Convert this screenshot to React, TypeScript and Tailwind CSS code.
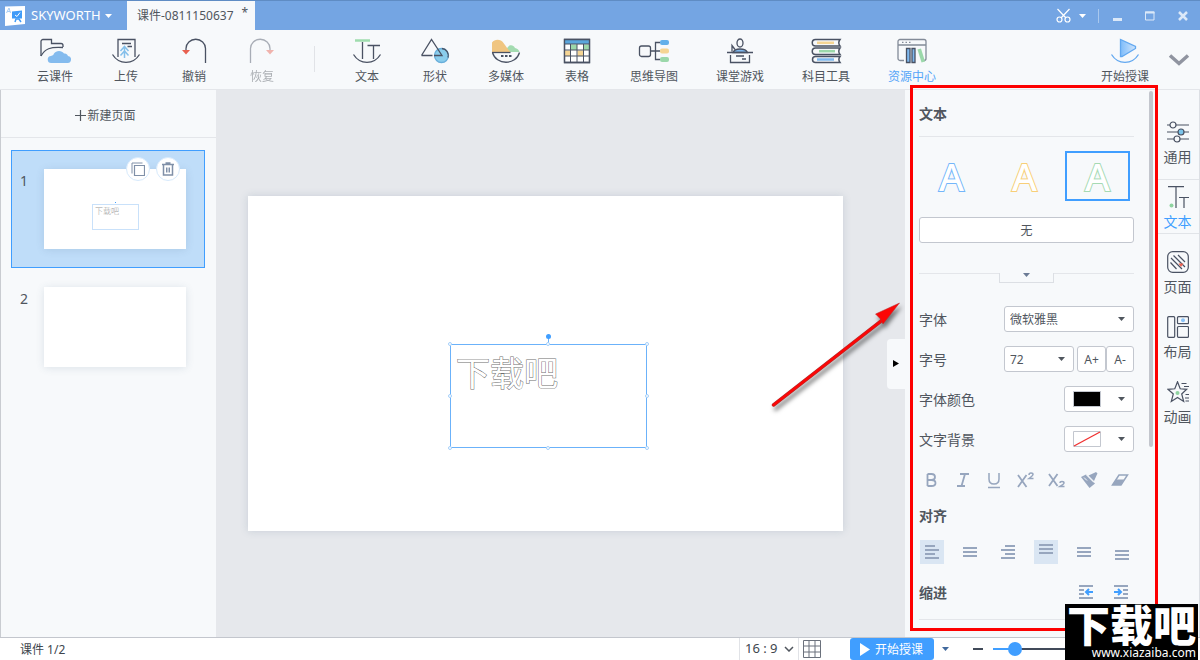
import { useState, type ReactNode } from 'react';
import clsx from 'clsx';

const INK = '#4a5263';

const Arc = ({ color = INK }: { color?: string }) => (
  <path d="M2.5 16.5C9 27 23 27 29.5 16.5" fill="none" stroke={color} strokeWidth="1.3" />
);

const icons: Record<string, ReactNode> = {
  cloud: (
    <>
      <path d="M2 18V3.5a2 2 0 0 1 2-2h8.5v4h9.500a2 2 0 0 1 2 2V9" />
      <path d="M2 18C6 11 11 8.500 24 9.500" />
      <path d="M12.500 25a3.500 3.500 0 0 1-.5-7c1.500-.5 2.500-1 3-2.500 2-3.500 8-3.500 10 0 3 0 3.500 1.500 4 2.500a3.500 3.500 0 0 1-1 7z" fill="#84bbee" stroke="none" />
    </>
  ),
  upload: (
    <>
      <path d="M8 19V1.500h17V19" />
      <path d="M12 5.500h9M17.500 8.500H22" />
      <path d="M14.500 20V9.500M10.500 13l4-4.500 4 4.500M10.500 17.500l4-4.500 4 4.500" stroke="#84bfea" strokeWidth="1.500" />
      <Arc />
    </>
  ),
  undo: (
    <>
      <path d="M8 13v-2.500a9.500 9 0 0 1 19.500 0V25" />
      <path d="M4 12h8l-4 4.500z" fill="#e8604f" stroke="none" />
    </>
  ),
  redo: (
    <>
      <path d="M24 13v-2.500a9.500 9 0 0 0-19.500 0V25" />
      <path d="M20 12h8l-4 4.500z" fill="#e8604f" stroke="none" />
    </>
  ),
  text: (
    <>
      <path d="M4 2.500h15" stroke="#9fdcae" strokeWidth="2.500" />
      <path d="M11.500 4v17M16.500 7.500H29M22.500 7.500V21" />
      <Arc />
    </>
  ),
  shape: (
    <>
      <circle cx="22.500" cy="17.500" r="7" fill="#8acdec" stroke="#68aeda" />
      <path d="M2.500 17.500L12.500 1.500l10.500 16h-8M2.500 17.500h11" />
      <path d="M23 10.500a7 7 0 0 1 6 9" />
    </>
  ),
  media: (
    <>
      <path d="M16 14c1-8 7-8 9-4 2 .5 4 1.500 4.500 4z" fill="#a3dbb0" stroke="none" />
      <path d="M2 14V4.500c3-4 9-3.500 11.500.5 2.500 3.500 4.500 6 7 9z" fill="#f0c580" stroke="none" />
      <path d="M2 14.500h18.500" />
      <path d="M2.500 14.500C6 27.500 26 27.500 29.500 14.500" />
      <path d="M11 18h2.500M15 18h2.500M19 18h2.500" strokeWidth="2" />
    </>
  ),
  table: (
    <>
      <path d="M3.500 1.500h25v23h-25z" fill="#fff" />
      <path d="M4 2h24v4H4z" fill="#5ba7dd" stroke="none" />
      <path d="M10 6.500h6V12h-6zM22.500 6.500h6V12h-6z" fill="#9bd8aa" stroke="none" />
      <path d="M4 12.500h6V18H4zM16.500 12.500h6V18h-6z" fill="#f5d594" stroke="none" />
      <path d="M3.500 6h25M3.500 12h25M3.500 18h25M9.500 6v18.500M16 6v18.500M22.500 6v18.500" strokeWidth="1" />
      <path d="M3.500 1.500h25v23h-25z" />
    </>
  ),
  mind: (
    <>
      <rect x="1.500" y="8" width="11" height="10.500" rx="2" />
      <path d="M12.500 13H22M22 4.500h-4.500v17H22" />
      <rect x="22" y="2" width="9" height="5" rx="2" fill="#63b0ea" stroke="none" />
      <rect x="22" y="10.500" width="9" height="5" rx="2" fill="#f5d594" stroke="none" />
      <rect x="22" y="19" width="9" height="5" rx="2" fill="#9bd8aa" stroke="none" />
    </>
  ),
  game: (
    <>
      <ellipse cx="16" cy="5" rx="3" ry="4" />
      <path d="M9 14.500c1-2.500 3-3.500 7-3.500s6.500 1 7.500 3.500z" fill="#7eb8ee" />
      <path d="M11 11.500L8 7.500v6M3 14.500h26M6.500 17v7.500h19V17M12 18h8M18 21h4" />
    </>
  ),
  books: (
    <>
      <path d="M30 1.500H5.500a3 3 0 0 0 0 6.500H30c-1.500-2-1.500-4.500 0-6.500zM30 10H5.500a3 3 0 0 0 0 6.500H30c-1.500-2-1.500-4.500 0-6.500zM30 18.500H5.500a3 3 0 0 0 0 6H30c-1.500-2-1.500-4 0-6z" strokeWidth="1.500" />
      <path d="M7 4.800h17" stroke="#f5d594" strokeWidth="2.500" />
      <path d="M9 13.200h16" stroke="#9bd8aa" strokeWidth="2.500" />
      <path d="M7 21.500h17" stroke="#7eb8ee" strokeWidth="2.500" />
    </>
  ),
  resource: (
    <>
      <path d="M8 22.500H4a2 2 0 0 1-2-2V3.500a2 2 0 0 1 2-2h24a2 2 0 0 1 2 2v17a2 2 0 0 1-2 2M2 7h28" stroke="#838b98" />
      <path d="M6 4.300h1.500M9.500 4.300H11M13 4.300h1.500" stroke="#838b98" />
      <path d="M10.500 10.500H14v14h-3.500zM16 10.500h3v14h-3z" fill="#7eb8ee" />
      <path d="M21.500 11.500l3.500-1 4 13-3.500 1z" fill="#9bd8aa" stroke="none" />
    </>
  ),
  play: (
    <>
      <defs>
        <linearGradient id="playFill">
          <stop offset="0" stopColor="#7ebcfa" />
          <stop offset="1" stopColor="#cfe5fc" />
        </linearGradient>
      </defs>
      <path d="M11.500 1.500v17h1.500l13.500-8v-2z" fill="url(#playFill)" stroke="#62a8f0" />
      <Arc color="#62a8f0" />
    </>
  ),
};

const historyTools = [
  { label: '云课件', icon: 'cloud', width: 'w-[74px]' },
  { label: '上传', icon: 'upload', width: 'w-[68px]' },
  { label: '撤销', icon: 'undo', width: 'w-[68px]' },
  { label: '恢复', icon: 'redo', width: 'w-[68px]', tone: 'opacity-45' },
];

const insertTools = [
  { label: '文本', icon: 'text', width: 'w-[68px]' },
  { label: '形状', icon: 'shape', width: 'w-[68px]' },
  { label: '多媒体', icon: 'media', width: 'w-[74px]' },
  { label: '表格', icon: 'table', width: 'w-[68px]' },
  { label: '思维导图', icon: 'mind', width: 'w-[86px]' },
  { label: '课堂游戏', icon: 'game', width: 'w-[86px]' },
  { label: '科目工具', icon: 'books', width: 'w-[86px]' },
  { label: '资源中心', icon: 'resource', width: 'w-[86px]', tone: 'text-[#55a5f8]' },
];

type Tool = { label: string; icon: string; width: string; tone?: string };

function ToolButton({ label, icon, width, tone }: Tool) {
  return (
    <button className={clsx('flex flex-col items-center shrink-0 pt-2 gap-[5px]', width, tone)}>
      <svg width="32" height="26" viewBox="0 0 32 26" fill="none" stroke={INK} strokeWidth="1.3">
        {icons[icon]}
      </svg>
      <span className="text-xs leading-4">{label}</span>
    </button>
  );
}

function Caret({ className }: { className?: string }) {
  return (
    <svg width="7" height="4" viewBox="0 0 7 4" className={className} fill="currentColor">
      <path d="M0 0h7L3.500 4z" />
    </svg>
  );
}

function TitleBar() {
  return (
    <header className="flex items-stretch h-[30px] shrink-0 bg-[#74a5e3] border-t border-[#5f8cc4] text-white">
      <button className="flex items-center w-[127px] pl-[5px]">
        <svg width="20" height="20" viewBox="0 0 20 20">
          <path d="M0 .5L20 0v18L0 20z" fill="#fff" />
          <path d="M1.500 7L4 2l1.500 5M2.200 5.500h3" fill="none" stroke="#a8cdf5" />
          <path d="M7 5.500l10-1v8H7z" fill="#3f9bf8" />
          <path d="M10 16l1-3h3l2 3" fill="none" stroke="#3f9bf8" strokeWidth="1.500" />
          <path d="M10 9l2 1.500 3-4" fill="none" stroke="#fff" />
        </svg>
        <span className="ml-1.5 text-[13px]">SKYWORTH</span>
        <Caret className="ml-1" />
      </button>
      <div className="flex items-center w-[128px] pl-2.5 bg-[#f7f9fb] text-[#50565e] text-xs whitespace-nowrap">
        <span>课件-0811150637</span>
        <span className="ml-2 self-start pt-1">*</span>
      </div>
      <div className="flex items-center ml-auto pr-[11px]">
        <button className="flex items-center gap-2" aria-label="截图">
          <svg width="15" height="15" viewBox="0 0 15 15" fill="none" stroke="#fff" strokeWidth="1.2">
            <path d="M1.500 1l8.500 9M13.500 1L5 10" />
            <circle cx="3.500" cy="11.500" r="2.500" />
            <circle cx="11.500" cy="11.500" r="2.500" />
          </svg>
          <Caret />
        </button>
        <span className="w-px h-3.5 mx-3 bg-[#a9c8ee]" />
        <button aria-label="最小化">
          <svg width="12" height="12"><path d="M2 9.500h9" stroke="#dbe8f8" strokeWidth="3" /></svg>
        </button>
        <button aria-label="最大化" className="ml-[21px]">
          <svg width="12" height="12" fill="none" stroke="#dbe8f8"><path d="M1.500 2h8.500v8H1.500z" /><path d="M1 2.500h9.500" strokeWidth="2" /></svg>
        </button>
        <button aria-label="关闭" className="ml-[21px]">
          <svg width="12" height="12" fill="none" stroke="#dbe8f8" strokeWidth="2.500"><path d="M2 2l8 8M10 2l-8 8" /></svg>
        </button>
      </div>
    </header>
  );
}

function Toolbar() {
  return (
    <nav className="flex h-[60px] shrink-0 pl-[18px] bg-[#f7f9fb] border-b border-[#e4e6ea] text-[#50565e]">
      {historyTools.map((t) => <ToolButton key={t.label} {...t} />)}
      <span className="w-px h-[26px] mt-4 mx-[18px] bg-[#e1e3e7] shrink-0" />
      {insertTools.map((t) => <ToolButton key={t.label} {...t} />)}
      <div className="flex ml-auto pr-2.5">
        <ToolButton label="开始授课" icon="play" width="w-[86px]" />
        <button aria-label="收起工具栏">
          <svg width="22" height="14" viewBox="0 0 22 14" fill="none" stroke="#9094a0" strokeWidth="3.500">
            <path d="M2 2.500l9 8 9-8" />
          </svg>
        </button>
      </div>
    </nav>
  );
}

function PageList() {
  const [current, setCurrent] = useState(1);
  return (
    <aside className="w-[216px] shrink-0 border-l border-[#c9ccd1] bg-[#f7f9fb] text-[#50565e]">
      <button className="flex items-center justify-center gap-px w-full h-12 pt-1 pr-1.5 border-b border-[#e4e6ea] text-xs">
        <svg width="11" height="11" stroke="#50565e" strokeWidth="1.2"><path d="M0 5.500h11M5.500 0v11" /></svg>
        新建页面
      </button>
      <ol className="pl-2.5 pr-[11px] pt-3">
        {[1, 2].map((n) => (
          <li
            key={n}
            onClick={() => setCurrent(n)}
            className={clsx(
              'relative flex h-[118px] pt-[18px] pl-2 border',
              current === n ? 'bg-[#bfddf9] border-[#409eff]' : 'border-transparent',
            )}
          >
            <span className="w-6 pt-0.5 text-sm">{n}</span>
            <div className="w-[142px] h-20 pl-12 pt-[35px] bg-white shadow-[0_1px_8px_rgba(60,90,120,0.14)]">
              {n === 1 && (
                <div className="relative w-[47px] h-[26px] pl-0.5 border border-[#c9e1fa] text-[8px] leading-3 text-[#999999] font-light">
                  下载吧
                  <span className="absolute left-[22px] -top-[3px] w-px h-px bg-[#409eff]" />
                </div>
              )}
            </div>
            {current === n && (
              <div className="absolute right-6 top-1.5 flex gap-1.5">
                <button aria-label="复制页面" className="flex items-center justify-center w-6 h-6 rounded-full bg-white border border-[#d7eafc]">
                  <svg width="14" height="14" fill="none" stroke="#8090a8"><path d="M3.500 3.500h10v10h-10z" strokeWidth="1.2" /><path d="M1 11.500V1h10.500" /></svg>
                </button>
                <button aria-label="删除页面" className="flex items-center justify-center w-6 h-6 rounded-full bg-white border border-[#d7eafc]">
                  <svg width="14" height="14" fill="none" stroke="#8090a8"><path d="M1 2.500h12M4.500 1h5" strokeWidth="1.500" /><path d="M2.500 3v10h9V3" strokeWidth="1.500" /><path d="M5.500 5.500v5M7 5.500v5M8.500 5.500v5" /></svg>
                </button>
              </div>
            )}
          </li>
        ))}
      </ol>
    </aside>
  );
}

const handles = [
  '-left-[3px] -top-[3px]', 'left-[95px] -top-[3px]', '-right-[3px] -top-[3px]',
  '-left-[3px] top-[49px]', '-right-[3px] top-[49px]',
  '-left-[3px] -bottom-[3px]', 'left-[95px] -bottom-[3px]', '-right-[3px] -bottom-[3px]',
];

function Canvas() {
  return (
    <main className="relative flex items-center flex-1 min-w-0 bg-[#e6e8ec]">
      <div className="flex justify-center flex-1 pr-3">
        <div className="relative w-full max-w-[595px] aspect-video bg-white shadow-[0_0_8px_rgba(60,90,120,0.18)]">
          <div className="absolute left-[202px] top-[148px] w-[197px] h-[104px] pl-[5px] pt-1 border border-[#6bb2fa]">
            <p className="text-[34px] leading-[48px] font-normal text-white [-webkit-text-stroke:1px_#6e6e6e] [paint-order:stroke_fill]">下载吧</p>
            <span className="absolute left-[97px] -top-[7px] w-px h-1.5 bg-[#6bb2fa]" />
            <span className="absolute left-[95px] -top-[11px] w-[5px] h-[5px] rounded-full bg-[#409eff]" />
            {handles.map((pos) => (
              <span key={pos} className={clsx('absolute w-1 h-1 rounded-full bg-white border border-[#a5d0fb]', pos)} />
            ))}
          </div>
        </div>
      </div>
      <button aria-label="收起面板" className="flex items-center justify-center w-[18px] h-[50px] rounded-l bg-[#f7f9fb]">
        <svg width="6" height="7"><path d="M0 0l6 3.500L0 7z" /></svg>
      </button>
      <svg width="150" height="124" viewBox="0 0 150 124" className="absolute right-0 top-[204px] drop-shadow-[2px_4px_2px_rgba(0,0,0,0.5)] pointer-events-none">
        <path d="M18.500 111L130 24" stroke="#b03030" strokeWidth="3.500" strokeLinecap="round" />
        <path d="M18.500 111L130 24" stroke="#fc0606" strokeWidth="2.500" strokeLinecap="round" />
        <path d="M144.500 9l-24 11 4.500 4.500 3 5.500z" fill="#fc0606" stroke="#b03030" strokeWidth=".5" />
      </svg>
    </main>
  );
}

const letterStyles = [
  { name: '蓝色描边', stroke: '[-webkit-text-stroke:2px_#74b6fa]' },
  { name: '黄色描边', stroke: '[-webkit-text-stroke:2px_#f8cf78]' },
  { name: '绿色描边', stroke: '[-webkit-text-stroke:2px_#a6dab3]' },
];

const box = 'h-[26px] bg-white border border-[#c3c7cf] rounded-[3px] text-xs';
const line = 'fill-none stroke-current stroke-2';

const formats = [
  { name: '加粗', icon: <path d="M5.500 3v12M5.500 3h4q3.500 0 3.500 3t-3.500 3h-4M9.500 9q4 0 4 3t-4 3h-4" /> },
  { name: '斜体', icon: <path d="M6 3h9M3 15h8M11 3L7.500 15" /> },
  { name: '下划线', icon: <path d="M4 2v6q0 5 5 5t5-5V2M3 16.500h12" strokeWidth="1.500" /> },
  { name: '上标', icon: <><path d="M1 4l8.500 12M9.500 4L1 16" /><path d="M12 4q0-2 2-2t2 1.500q0 1-4 4h4.500" strokeWidth="1.500" /></> },
  { name: '下标', icon: <><path d="M1 3l8.500 12M9.500 3L1 15" /><path d="M12 12q0-1.500 2-1.500t2 1.500q0 1-4 3.500h4.500" strokeWidth="1.500" /></> },
  { name: '格式刷', icon: <><path d="M1 6l5-2.500 9 9L9.500 17z" fill="currentColor" stroke="none" /><path d="M8.500 4.500L14 2l2-1 1.500 1.500-1 2L14 10z" fill="currentColor" stroke="none" /><path d="M6.500 4L14 11.500M4 6.500l3 3" stroke="#f7f9fb" strokeWidth="1" /></> },
  { name: '清除格式', icon: <><path d="M1.500 14L8 4h8.500L10 14z" strokeWidth="1.500" /><path d="M1.500 14l3.500-5.500h8L10 14z" fill="currentColor" stroke="none" /></> },
];

const aligns = [
  { name: '左对齐', d: 'M5 6h10M5 10h14M5 14h10M5 18h14', on: true },
  { name: '居中', d: 'M5 8h14M5 12h14M5 16h14' },
  { name: '右对齐', d: 'M9 6h10M5 10h14M9 14h10M5 18h14' },
  { name: '顶端对齐', d: 'M5 5h14M5 9h14M5 13h14', on: true },
  { name: '垂直居中', d: 'M5 8h14M5 12h14M5 16h14' },
  { name: '底端对齐', d: 'M5 11h14M5 15h14M5 19h14' },
];

function TextPanel() {
  const [style, setStyle] = useState(2);
  return (
    <section className="relative flex w-[250px] shrink-0 pl-3.5 bg-[#f7f9fb] text-[#50565e]">
      <div className="w-[215px]">
        <h2 className="h-[47px] pt-3.5 text-sm font-semibold border-b border-[#e4e6ea]">文本</h2>
        <div className="flex gap-2 mt-3.5">
          {letterStyles.map((s, i) => (
            <button
              key={s.name}
              aria-label={s.name}
              onClick={() => setStyle(i)}
              className={clsx(
                'flex items-center justify-center w-[65px] h-[50px] border-2',
                style === i ? 'border-[#409eff]' : 'border-transparent',
              )}
            >
              <span className={clsx("font-['Noto_Sans'] font-medium text-[38px] leading-none text-white [paint-order:stroke_fill]", s.stroke)}>A</span>
            </button>
          ))}
        </div>
        <button className={clsx(box, 'w-full mt-4 pt-px')}>无</button>
        <div className="flex mt-[30px]">
          <span className="flex-1 border-t border-[#e4e6ea]" />
          <button aria-label="展开" className="flex items-start justify-center w-[55px] h-2.5 border border-t-0 border-[#dcdfe4] text-[#6b7b95]">
            <Caret />
          </button>
          <span className="flex-1 border-t border-[#e4e6ea]" />
        </div>

        <div className="grid gap-3.5 mt-[23px] text-sm">
          <div className="flex items-center justify-between">
            <label htmlFor="family" className="pt-0.5">字体</label>
            <div className="relative w-[130px]">
              <select id="family" className={clsx(box, 'w-full pl-[5px] pt-px appearance-none')}>
                <option>微软雅黑</option>
              </select>
              <Caret className="absolute right-[9px] top-[11px] pointer-events-none" />
            </div>
          </div>
          <div className="flex items-center">
            <label htmlFor="size" className="flex-1 pt-0.5">字号</label>
            <div className="relative w-[70px] mr-[3px]">
              <select id="size" className={clsx(box, 'w-full pl-[5px] pt-px appearance-none')}>
                <option>72</option>
              </select>
              <Caret className="absolute right-[9px] top-[11px] pointer-events-none" />
            </div>
            <button className={clsx(box, 'w-[29px] pt-px')}>A+</button>
            <button className={clsx(box, 'w-7 pt-px')}>A-</button>
          </div>
          <div className="flex items-center justify-between">
            <span id="color" className="pt-0.5">字体颜色</span>
            <button aria-labelledby="color" className={clsx(box, 'flex items-center justify-between w-[70px] px-2')}>
              <span className="w-7 h-4 bg-black border border-[#c3c7cf]" />
              <Caret />
            </button>
          </div>
          <div className="flex items-center justify-between">
            <span id="background" className="pt-0.5">文字背景</span>
            <button aria-labelledby="background" className={clsx(box, 'flex items-center justify-between w-[70px] px-2')}>
              <svg width="28" height="16" fill="none"><path d="M.5.5h27v15H.5z" stroke="#c3c7cf" /><path d="M1 15L27 1" stroke="#f03030" strokeWidth="1.3" /></svg>
              <Caret />
            </button>
          </div>
        </div>

        <div className="flex justify-between mt-[19px] pl-[3px] pr-[5px] text-[#97a6be]">
          {formats.map((f) => (
            <button key={f.name} aria-label={f.name}>
              <svg width="18" height="18" viewBox="0 0 18 18" className="fill-none stroke-current" strokeWidth="1.8">{f.icon}</svg>
            </button>
          ))}
        </div>
        <h3 className="mt-[17px] text-sm font-semibold">对齐</h3>
        <div className="flex gap-3.5 mt-3.5 pl-px text-[#97a6be]">
          {aligns.map((a) => (
            <button key={a.name} aria-label={a.name} className={clsx(a.on && 'bg-[#dae6f3]')}>
              <svg width="24" height="24" className={line}><path d={a.d} /></svg>
            </button>
          ))}
        </div>
        <div className="flex items-center gap-[21px] h-14 pr-1.5 text-[#97a6be] border-b border-[#e4e6ea]">
          <h3 className="flex-1 pt-0.5 text-sm font-semibold text-[#50565e]">缩进</h3>
          <button aria-label="减少缩进">
            <svg width="14" height="14" className={line}><path d="M0 1h14M0 5h5M0 9h5M0 13h14" /><path d="M7 7h7M10 4L7 7l3 3" stroke="#409eff" /></svg>
          </button>
          <button aria-label="增加缩进">
            <svg width="14" height="14" className={line}><path d="M0 1h14M9 5h5M9 9h5M0 13h14" /><path d="M0 7h7M4 4l3 3-3 3" stroke="#409eff" /></svg>
          </button>
        </div>
      </div>
      <div className="w-1 h-[356px] mt-px ml-[15px] rounded-full bg-[#c3c6cd]" />
      <div className="absolute left-[5px] -right-[3px] -top-[5px] bottom-1.5 border-3 border-[#fd0000] z-10 pointer-events-none" />
    </section>
  );
}

const tabs = [
  {
    label: '通用',
    icon: <><path d="M0 4h22M0 11h22M0 18h22" /><circle cx="6" cy="4" r="3" fill="#f7f9fb" /><circle cx="14" cy="11" r="3" fill="#7cc4ea" /><circle cx="10" cy="18" r="3" fill="#f7f9fb" /></>,
  },
  {
    label: '文本',
    icon: <><path d="M1 .7h16M9 1v21M12 11.500h10M17 12v10" /><circle cx="4.500" cy="19.500" r="2" fill="#8fd3a0" stroke="none" /></>,
  },
  {
    label: '页面',
    icon: <><rect x=".7" y=".7" width="20.600" height="20.600" rx="5" /><path d="M4 7l11 11M3.500 11.500l6 6.500M6.500 4.500L18 16M11 4l7 7" /><path d="M11.500 12.500h5L14 16z" fill="#ee6050" stroke="none" /></>,
  },
  {
    label: '布局',
    icon: <><rect x=".7" y=".7" width="7" height="20.600" rx="1" /><rect x="10.500" y=".7" width="11" height="7" rx="1" /><rect x="10.500" y="10.500" width="11" height="10.800" rx="1" /><circle cx="16" cy="4.200" r="2" fill="#8cc3f8" stroke="none" /></>,
  },
  {
    label: '动画',
    icon: <><path d="M10.500.8l2.700 7 6.500.5-5 4.700 2 7.500-6.200-4-6.200 4 2-7.500-5.300-4.700 6.800-.5z" /><path d="M14.500 2.500h5M17 5.500h5M18.500 13.500H22M18 17h4M18.500 20H22" /><circle cx="10.500" cy="12" r="2" fill="#8fd3a0" stroke="none" /></>,
  },
];

function SideTabs() {
  const [active, setActive] = useState('文本');
  return (
    <nav className="flex flex-col gap-2.5 w-[45px] pt-6 shrink-0 bg-[#f7f9fb] border-x border-[#dcdfe4]">
      {tabs.map((t) => (
        <button
          key={t.label}
          onClick={() => setActive(t.label)}
          className={clsx(
            'flex flex-col items-center gap-1 h-[55px] pt-1.5 text-sm border-y',
            active === t.label ? 'text-[#409eff] border-[#e1e4e8]' : 'text-[#50565e] border-transparent',
          )}
        >
          <svg width="22" height="22" viewBox="0 0 22 22" fill="none" stroke={INK} strokeWidth="1.2" className="shrink-0">{t.icon}</svg>
          <span>{t.label}</span>
        </button>
      ))}
    </nav>
  );
}

function StatusBar() {
  const [zoom, setZoom] = useState(12);
  return (
    <footer className="flex items-center h-[23px] shrink-0 pl-5 bg-white border-t border-[#c3c6cd] text-xs text-[#40464e]">
      <span className="flex-1 pt-0.5">课件 1/2</span>
      <div className="relative w-[60px] border-x border-[#e1e3e7]">
        <select aria-label="页面比例" className="w-full h-[22px] pl-[5px] text-[13px] appearance-none">
          <option>16 : 9</option>
        </select>
        <svg width="10" height="6" fill="none" stroke="#50565e" strokeWidth="1.5" className="absolute right-1 top-2 pointer-events-none"><path d="M1 1l4 4 4-4" /></svg>
      </div>
      <button aria-label="网格" className="ml-1">
        <svg width="18" height="18" fill="none" stroke="#6b717c"><path d="M.5.500h17v17H.5zM6 .5v17M12 .5v17M.5 6h17M.5 12h17" /></svg>
      </button>
      <button className="flex items-center gap-[5px] w-[84px] h-[22px] ml-[29px] pl-2.5 rounded-[3px] bg-[#409eff] text-white">
        <svg width="10" height="13" fill="currentColor"><path d="M0 0l10 6.500L0 13z" /></svg>
        <span className="pt-0.5">开始授课</span>
      </button>
      <button aria-label="授课选项" className="ml-2 text-[#41699d]"><Caret /></button>
      <button aria-label="缩小" className="w-2.5 h-0.5 ml-6 bg-[#414a59]" />
      <input
        type="range"
        aria-label="缩放"
        value={zoom}
        onChange={(e) => setZoom(Number(e.target.value))}
        style={{ backgroundImage: `linear-gradient(to right, #409eff ${zoom}%, #414a59 ${zoom}%)` }}
        className="w-[140px] h-0.5 ml-2.5 mr-[67px] appearance-none [&::-webkit-slider-thumb]:appearance-none [&::-webkit-slider-thumb]:w-3.5 [&::-webkit-slider-thumb]:h-3.5 [&::-webkit-slider-thumb]:rounded-full [&::-webkit-slider-thumb]:bg-[#409eff]"
      />
    </footer>
  );
}

export default function App() {
  return (
    <div className="relative flex flex-col min-h-screen overflow-hidden font-['Noto_Sans','Noto_Sans_CJK_SC',sans-serif]">
      <TitleBar />
      <Toolbar />
      <div className="flex flex-1">
        <PageList />
        <Canvas />
        <TextPanel />
        <SideTabs />
      </div>
      <StatusBar />
      <div className="absolute right-0.5 bottom-0 z-20 w-[133px] h-14 bg-black text-white text-right">
        <p className="text-[43px] leading-[43px] font-black whitespace-nowrap text-center">下载吧</p>
        <p className="pr-0.5 text-xs leading-3">www.xiazaiba.com</p>
      </div>
    </div>
  );
}
